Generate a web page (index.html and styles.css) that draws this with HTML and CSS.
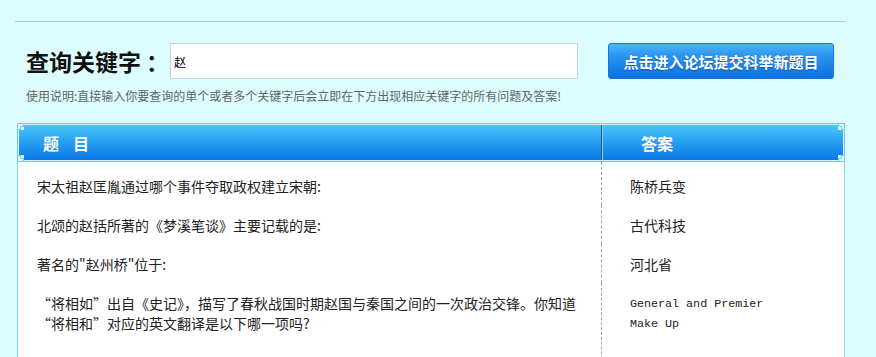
FILE: index.html
```html
<!DOCTYPE html>
<html lang="zh-CN">
<head>
<meta charset="utf-8">
<title>查询关键字</title>
<link rel="stylesheet" href="styles.css">
</head>
<body>
<div class="wrap">
  <div class="rule"></div>
  <div class="search">
    <h1 class="title">查询关键字<span class="colon">：</span></h1>
    <input class="kw" type="text" value="赵">
    <a class="btn" href="#">点击进入论坛提交科举新题目</a>
  </div>
  <p class="help">使用说明:直接输入你要查询的单个或者多个关键字后会立即在下方出现相应关键字的所有问题及答案!</p>
  <div class="table">
    <div class="thead">
      <div class="thead-in">
        <div class="th th-q">题目</div>
        <div class="th th-a">答案</div>
      </div>
      <svg class="corner c-tl" viewBox="0 0 10 10" width="10" height="10"><rect x="0" y="0" width="7" height="7" fill="#ddfcfe"/><path d="M.5 10V6.5H3.5V3.5M.5 6.5V.5H6.5V3.5H3.5M6.5 .5H10" fill="none" stroke="#6ecbe3"/></svg>
      <svg class="corner c-tr" viewBox="0 0 10 10" width="10" height="10"><rect x="0" y="0" width="7" height="7" fill="#ddfcfe"/><path d="M.5 10V6.5H3.5V3.5M.5 6.5V.5H6.5V3.5H3.5M6.5 .5H10" fill="none" stroke="#6ecbe3"/></svg>
      <svg class="corner c-bl" viewBox="0 0 10 10" width="10" height="10"><rect x="0" y="0" width="7" height="7" fill="#ddfcfe"/><path d="M.5 10V6.5H3.5V3.5M.5 6.5V.5H6.5V3.5H3.5M6.5 .5H10" fill="none" stroke="#6ecbe3"/></svg>
      <svg class="corner c-br" viewBox="0 0 10 10" width="10" height="10"><rect x="0" y="0" width="7" height="7" fill="#ddfcfe"/><path d="M.5 10V6.5H3.5V3.5M.5 6.5V.5H6.5V3.5H3.5M6.5 .5H10" fill="none" stroke="#6ecbe3"/></svg>
    </div>
    <div class="tbody">
      <div class="td q first">宋太祖赵匡胤通过哪个事件夺取政权建立宋朝:</div>
      <div class="td a first">陈桥兵变</div>
      <div class="td q">北颂的赵括所著的《梦溪笔谈》主要记载的是:</div>
      <div class="td a">古代科技</div>
      <div class="td q">著名的"赵州桥"位于:</div>
      <div class="td a">河北省</div>
      <div class="td q last">“将相如”出自《史记》，描写了春秋战国时期赵国与秦国之间的一次政治交锋。你知道“将相和”对应的英文翻译是以下哪一项吗?</div>
      <div class="td a mono last">General and Premier Make Up</div>
    </div>
  </div>
</div>
</body>
</html>
```

FILE: styles.css
```css
html, body {
  margin: 0;
  padding: 0;
  background: #ddfcfe;
}
body {
  font-family: "Noto Sans CJK SC", "Noto Sans", sans-serif;
  color: #222;
}
.wrap {
  width: 830px;
  margin-left: 15px;
  padding-top: 21px;
}
.rule {
  border-top: 1px solid #a9cdd3;
}
.search {
  display: flex;
  align-items: center;
  margin-top: 21px;
  padding-left: 11px;
}
.title {
  margin: 0;
  font-size: 23px;
  font-weight: bold;
  line-height: 36px;
  color: #111;
  white-space: nowrap;
}
.colon {
  padding-left: 5px;
}
.kw {
  box-sizing: border-box;
  width: 408px;
  height: 36px;
  margin: 0 0 0 1px;
  padding: 0 3px;
  border: 1px solid #c7d5d8;
  background: #fff;
  font-family: "Noto Sans CJK SC", sans-serif;
  font-size: 12px;
  color: #000;
  outline: none;
}
.btn {
  box-sizing: border-box;
  display: flex;
  align-items: center;
  justify-content: center;
  width: 226px;
  height: 36px;
  margin-left: 30px;
  border: 1px solid #1776d6;
  border-radius: 3px;
  background: linear-gradient(#4db4f8 0%, #2a95f0 35%, #0b6fe2 100%);
  color: #fff;
  font-size: 15px;
  font-weight: bold;
  text-decoration: none;
  text-shadow: 0 1px 1px rgba(0, 40, 110, 0.45);
}
.help {
  margin: 9px 0 0;
  padding-left: 11px;
  font-size: 12px;
  line-height: 16px;
  color: #5f6566;
}
.table {
  width: 828px;
  margin-top: 19px;
  margin-left: 2px;
}
.thead {
  position: relative;
  border: 1px solid #6ecbe3;
  padding: 1px;
  background: #cdf3fb;
}
.thead-in {
  display: flex;
  height: 35px;
  background: linear-gradient(#4ac3fa 0%, #2aa2f2 45%, #0b77e6 100%);
}
.th {
  box-sizing: border-box;
  display: flex;
  align-items: center;
  font-size: 16px;
  font-weight: bold;
  color: #fff;
}
.th-q {
  width: 583px;
  padding-left: 24px;
  letter-spacing: 14px;
  border-right: 1px solid #1a5d95;
}
.th-a {
  flex: 1;
  padding-left: 38px;
  border-left: 1px solid #7fd3f5;
}
.corner {
  position: absolute;
  display: block;
}
.c-tl { left: -1px; top: -1px; }
.c-tr { right: -1px; top: -1px; transform: scaleX(-1); }
.c-bl { left: -1px; bottom: -1px; transform: scaleY(-1); }
.c-br { right: -1px; bottom: -1px; transform: scale(-1, -1); }
.tbody {
  display: grid;
  grid-template-columns: 584px 1fr;
  align-items: start;
  border-left: 1px solid #8fd2e2;
  border-right: 1px solid #8fd2e2;
  background: #fff;
}
.td {
  box-sizing: border-box;
  align-self: stretch;
  padding: 10px 0 9px;
  font-size: 14px;
  line-height: 20px;
  color: #222;
}
.td.first {
  padding-top: 14px;
}
.td.last {
  padding-bottom: 40px;
}
.q {
  padding-left: 19px;
  padding-right: 12px;
  border-right: 1px dashed #a3a8aa;
}
.a {
  padding-left: 28px;
  padding-right: 20px;
}
.mono {
  font-family: "Liberation Mono", "DejaVu Sans Mono", monospace;
  font-size: 11.7px;
  line-height: 20px;
  padding-top: 11px;
  padding-right: 60px;
}
```
